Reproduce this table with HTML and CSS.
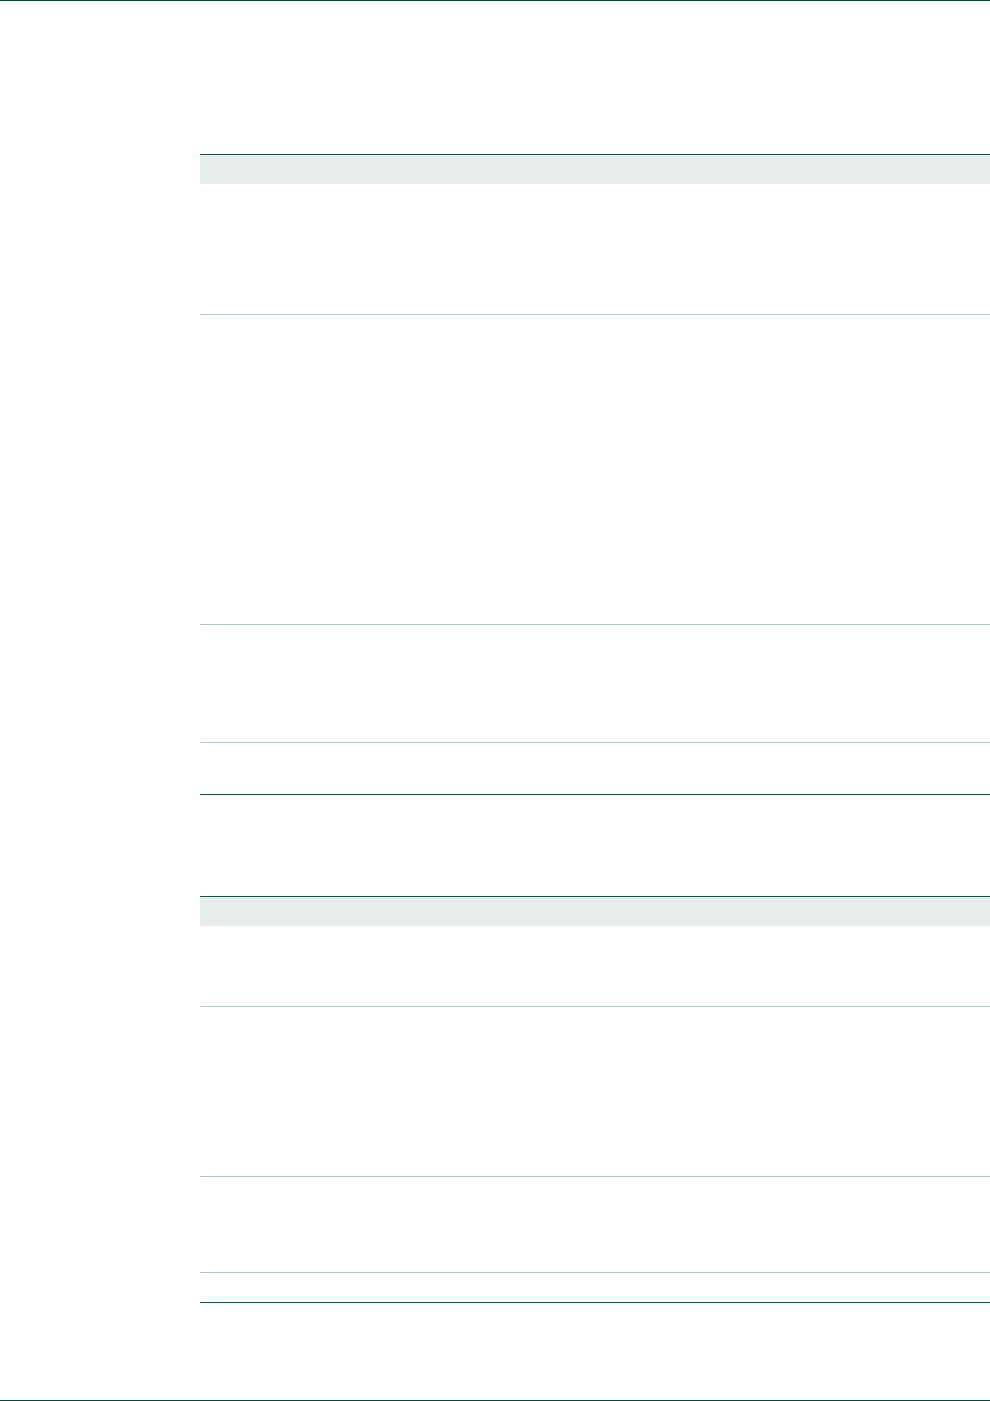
FILE: index.html
```html
<!DOCTYPE html>
<html lang="en">
<head>
    <meta charset="UTF-8">
    <meta name="viewport" content="width=device-width, initial-scale=1.0">
    <title>Document page</title>
    <link rel="stylesheet" href="styles.css">
</head>
<body>

    <div class="page">
        <div class="content">

            <!-- first table -->
            <div class="table table-first">
                <div class="table-head"></div>
                <div class="table-row row-a1"></div>
                <div class="table-row row-a2"></div>
                <div class="table-row row-a3"></div>
                <div class="table-row row-a4"></div>
            </div>

            <!-- second table -->
            <div class="table table-second">
                <div class="table-head"></div>
                <div class="table-row row-b1"></div>
                <div class="table-row row-b2"></div>
                <div class="table-row row-b3"></div>
                <div class="table-row row-b4"></div>
            </div>

        </div>
    </div>

</body>
</html>
```
FILE: styles.css
```css
body {
    font-family: "Liberation Sans", Arial, sans-serif;
    background-color: #fff;
    margin: 0;
    padding: 0;
    color: #333;
}

.page {
    box-sizing: border-box;
    height: 1401px;
    border-top: 1px solid #00493c;
    border-bottom: 1px solid #00493c;
    overflow: hidden;
}

.content {
    padding-left: 200px;
}

.table {
    border-top: 1px solid #005846;
}

.table-first {
    margin-top: 153px;
}

.table-second {
    margin-top: 101px;
}

.table-head {
    height: 29px;
    background-color: #e6eceb;
}

.table-row {
    border-bottom: 1px solid #b3c9c3;
}

.table-row:last-child {
    border-bottom-color: #005846;
}

.row-a1 { height: 130px; }
.row-a2 { height: 309px; }
.row-a3 { height: 117px; }
.row-a4 { height: 51px; }

.row-b1 { height: 80px; }
.row-b2 { height: 169px; }
.row-b3 { height: 95px; }
.row-b4 { height: 29px; }
```
